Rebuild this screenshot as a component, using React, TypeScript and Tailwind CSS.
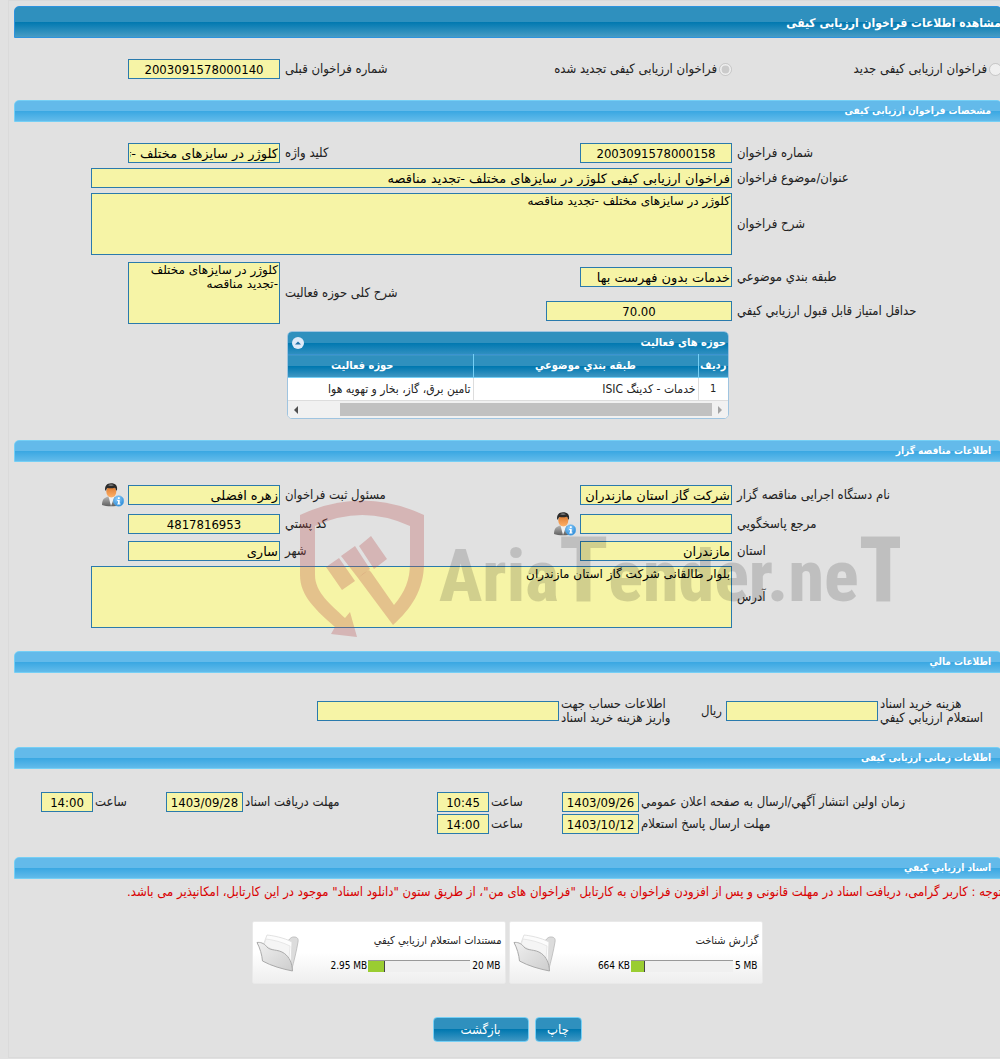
import { useId, useState } from "react";
import type { ReactNode } from "react";

const inputBase = "block h-5 border border-[#2a7aac] bg-[#f6f4a6] px-px text-[13px] leading-[18px] text-black outline-none focus:border-sky-500"
const areaBase = "block h-[62px] resize-none border border-[#2a7aac] bg-[#f6f4a6] px-px py-0 font-['DejaVu_Sans',sans-serif] text-[12px] leading-[14px] text-black outline-none focus:border-sky-500"

type FieldProps = {
  label: ReactNode
  value?: string
  labelClass: string
  inputClass: string
  center?: boolean
  area?: boolean
  children?: ReactNode
}

// numbers are centered, texts start at the right edge
function Field({ label, value = "", labelClass, inputClass, center, area, children }: FieldProps) {
  const id = useId()
  return (
    <div className="flex shrink-0 items-center">
      <label htmlFor={id} className={`shrink-0 text-left ${labelClass}`}>{label}</label>
      {area
        ? <textarea id={id} readOnly defaultValue={value} className={`${areaBase} ${inputClass}`} />
        : <input id={id} type="text" readOnly defaultValue={value} className={`${inputBase} ${inputClass} ${center ? "text-center" : "font-['DejaVu_Sans',sans-serif]"}`} />}
      {children}
    </div>
  )
}

function SectionBar({ title }: { title: string }) {
  return (
    <h2 className="h-[22px] rounded-t-[5px] border border-[#75cff5] bg-[linear-gradient(#63baea_0,#63baea_50%,#39a7e2_50%,#62bbea_100%)] pr-[10px] text-[10px] leading-5 font-bold text-white">
      {title}
    </h2>
  )
}

function PersonInfo() {
  return (
    <button type="button" aria-label="اطلاعات" className="mr-1 shrink-0 cursor-pointer">
      <svg width="22" height="24" viewBox="0 0 22 24">
        <defs>
          <linearGradient id="suit" x1="0" y1="0" x2="0" y2="1">
            <stop offset="0" stopColor="#b5b5b5" />
            <stop offset="1" stopColor="#5f5f5f" />
          </linearGradient>
          <linearGradient id="face" x1="0" y1="0" x2="0" y2="1">
            <stop offset="0" stopColor="#d9762c" />
            <stop offset="1" stopColor="#ffb066" />
          </linearGradient>
          <radialGradient id="info" cx=".4" cy=".3" r=".8">
            <stop offset="0" stopColor="#8fd0ff" />
            <stop offset="1" stopColor="#1d7fd0" />
          </radialGradient>
        </defs>
        <path d="M0 22c0-4 1-7 6-8.500h6c5 1.500 6 4.500 6 8.500-4 1.800-14 1.800-18 0z" fill="url(#suit)" />
        <path d="M6.500 13.500l2.500 9.500 3.500-9.500z" fill="#f2f2f2" />
        <ellipse cx="9.300" cy="8.600" rx="5" ry="5.800" fill="url(#face)" />
        <path d="M3.200 7.500C2.400 3 5 .2 9 .2c4.500 0 6.800 2.600 6 6.800l-.9.800c-.1-2-.9-2.700-1.600-3-2.300.7-5 .7-7 .1-.8.600-1.200 1.200-1.300 2.700z" fill="#2b2b2b" />
        <path d="M6 2.200c1.800-1.200 4.300-1.200 6 .1-2 .8-4.200.8-6-.1z" fill="#777" />
        <circle cx="16.700" cy="18" r="5.200" fill="url(#info)" stroke="#5fb0ea" strokeWidth=".6" />
        <path d="M16 14.200h1.700v1.700H16zM15.200 17h2.500v3.600h.8v1h-3.300v-1h.8V18h-.8z" fill="#fff" />
      </svg>
    </button>
  )
}

function Folder() {
  return (
    <svg width="43" height="38" viewBox="0 0 43 38" className="shrink-0">
      <defs>
        <linearGradient id="front" x1="0" y1="0" x2="1" y2="1">
          <stop offset="0" stopColor="#f0f0f0" />
          <stop offset="1" stopColor="#cdcdcd" />
        </linearGradient>
      </defs>
      <path d="M27 6l5 1c2-3 4-4.500 7-4 3 .5 3.500 2.500 3 5-1.500 9-4 19-6.500 28.500L24 20z" fill="#dcdcdc" stroke="#b9b9b9" strokeWidth=".8" />
      <path d="M8 9l3-8c5 .5 17 2.500 25 7L35 29 10 18z" fill="#fcfcfc" stroke="#dadada" strokeWidth=".8" />
      <path d="M8 11l2-6c8 1 16 3 24 7l-1 12z" fill="#f5f5f5" stroke="#e2e2e2" strokeWidth=".8" />
      <path d="M1 8.500c3-.5 7 .5 9.500 4 4 5 11 2 18 7 5 4 7.500 9 8 17.500-10-2-21-5-30-10C6 21 4 14 1 8.500z" fill="url(#front)" stroke="#aaa" strokeWidth="1" />
    </svg>
  )
}

const docs = [
  { title: "گزارش شناخت", max: "5 MB", used: "664 KB", percent: 14 },
  { title: "مستندات استعلام ارزيابي کيفي", max: "20 MB", used: "2.95 MB", percent: 16 },
]

function DocCard({ doc }: { doc: (typeof docs)[number] }) {
  return (
    <div className="flex h-[63px] w-[254px] items-center justify-between rounded-xs border border-[#e9e9e9] bg-[linear-gradient(#fff_50%,#eee)] px-[3px]">
      <div className="flex flex-col gap-3">
        <a href="#" className="text-[11px] leading-[14px] text-[#222]">{doc.title}</a>
        <div className="flex items-center gap-px text-[10px] leading-3 text-black">
          <span dir="ltr" className="px-px">{doc.max}</span>
          <div className="flex h-3 w-[102px] justify-end border-t border-[#999] bg-[#f0f0f0]">
            <div className="border-r border-[#444] bg-[#9acd32]" style={{ width: `${doc.percent}%` }} />
          </div>
          <span dir="ltr">{doc.used}</span>
        </div>
      </div>
      <Folder />
    </div>
  )
}

function ActivityGrid() {
  const [open, setOpen] = useState(true)
  return (
    <div className="mx-auto mt-[2px] w-[442px] overflow-hidden rounded-[5px] border border-[#9fc4e0] bg-white">
      <div className="flex h-[22px] items-center justify-between bg-[linear-gradient(#2f90be_0,#2f90be_50%,#0078b0_50%,#2f8fc0_100%)] pr-[2px] pl-1 text-[11px] font-bold text-white">
        <span>حوزه های فعالیت</span>
        <button
          type="button"
          aria-label="بستن"
          onClick={() => setOpen(!open)}
          className="flex size-3 cursor-pointer items-center justify-center rounded-full bg-[#dfeaf8]"
        >
          <svg width="6" height="4" viewBox="0 0 6 4"><path d="M0 3.500L3 .5l3 3z" fill="#1f6fa5" /></svg>
        </button>
      </div>
      {open && (
        <>
          <table className="w-full table-fixed border-collapse">
            <thead>
              <tr className="h-[23px] border-t border-b border-t-[#3a93d0] border-b-[#75cff5] bg-[linear-gradient(#2f90be_0,#2f90be_50%,#0078b0_50%,#3f97c3_100%)] text-[11px] leading-4 text-white">
                <th className="w-[30px] p-0">ردیف</th>
                <th className="w-[225px] border-x border-[#75cff5] p-0">طبقه بندي موضوعي</th>
                <th className="p-0 pr-9">حوزه فعالیت</th>
              </tr>
            </thead>
            <tbody>
              <tr className="h-[23px] border-b border-[#ddd] text-[12px] leading-4 text-[#222]">
                <td className="p-0 text-center text-[11px]">1</td>
                <td className="border-x border-[#ddd] px-[2px] py-0">خدمات - کدینگ ISIC</td>
                <td className="px-[2px] py-0">تامین برق، گاز، بخار و تهویه هوا</td>
              </tr>
            </tbody>
          </table>
          <div className="flex h-[17px] items-center bg-[#f1f1f1] px-[6px]">
            <svg width="4" height="8" viewBox="0 0 4 8"><path d="M0 0l4 4-4 4z" fill="#a3a3a3" /></svg>
            <div className="mr-[6px] ml-auto h-[13px] w-[372px] bg-[#c1c1c1]" />
            <svg width="4" height="8" viewBox="0 0 4 8"><path d="M4 0L0 4l4 4z" fill="#505050" /></svg>
          </div>
        </>
      )}
    </div>
  )
}

function Watermark() {
  return (
    <div dir="ltr" className="pointer-events-none absolute top-[60px] right-[102px]">
      <svg width="600" height="140" viewBox="300 500 600 140">
        <g fill="#b94e50" fillOpacity=".3">
          <path d="M300 515Q362 486 424 515V563C424 590 411 609 393 625L358 578 364 573 369 570 371 572 394 605C405 592 410 580 410 563V526Q362 504 315 526V575C315 592 330 604 345 618L350 612 357 637 331 634 335 627C316 610 300 596 300 575Z" />
          <path d="M359 546l12-10 16 23-13 10zM341 556l14-10 15 23-12 9zM326 567l13-9 16 23-13 9z" />
        </g>
        <text x="439" y="601" fontSize="72" fontWeight="800" fill="#000" fillOpacity=".15" className="font-['Liberation_Sans_Narrow','Roboto_Condensed','Roboto',sans-serif]">
          Aria<tspan fontSize="90">T</tspan>ender.ne<tspan fontSize="90">T</tspan>
        </text>
      </svg>
    </div>
  )
}

const times = [
  [
    { label: "زمان اولین انتشار آگهي/ارسال به صفحه اعلان عمومي", date: "1403/09/26", time: "10:45", width: "w-[363px]" },
    { label: "مهلت دریافت اسناد", date: "1403/09/28", time: "14:00", width: "w-[194px]" },
  ],
  [
    { label: "مهلت ارسال پاسخ استعلام", date: "1403/10/12", time: "14:00", width: "w-[363px]" },
  ],
]

const buttonBase = "h-[25px] cursor-pointer rounded-[4px] border border-[#75cff5] bg-[linear-gradient(#2f90be_0,#2f90be_50%,#0078b0_50%,#3f97c3_100%)] text-[13px] text-white"

export default function App() {
  return (
    <div dir="rtl" className="min-h-screen overflow-hidden bg-[#e1e1e1] font-['DejaVu_Sans_Condensed','DejaVu_Sans','Liberation_Sans',sans-serif] text-[13px] leading-[14px] text-[#222]">
      <div className="-mr-[3px] ml-2 min-h-[1058px] border border-[#dadada] pt-[5px] pl-[5px] whitespace-nowrap">
        <h1 className="h-8 rounded-t-[5px] border border-[#2d93de] bg-[linear-gradient(#2f90be_0,#2f90be_50%,#0078b0_50%,#469cc5_100%)] text-[12px] leading-8 font-bold text-white">
          مشاهده اطلاعات فراخوان ارزیابی کیفی
        </h1>

        <div className="flex items-center pt-[21px] pb-[21px]">
          <label className="flex w-[270px] shrink-0 items-center gap-[2px]">
            <input type="radio" name="kind" disabled className="size-[13px]" />
            فراخوان ارزیابی کیفی جدید
          </label>
          <label className="flex w-[220px] shrink-0 items-center gap-[2px]">
            <input type="radio" name="kind" disabled defaultChecked className="size-[13px]" />
            فراخوان ارزیابی کیفی تجدید شده
          </label>
          <Field label="شماره فراخوان قبلی" value="2003091578000140" center labelClass="w-[232px] pl-[5px]" inputClass="w-[152px]" />
        </div>

        <SectionBar title="مشخصات فراخوان ارزیابی کیفی" />
        <div className="flex flex-col gap-[5px] pt-[21px] pb-[21px]">
          <div className="flex">
            <Field label="شماره فراخوان" value="2003091578000158" center labelClass="w-[270px] pl-[5px]" inputClass="w-[152px]" />
            <Field label="کلید واژه" value="کلوژر در سایزهای مختلف -تجدید مناقصه" labelClass="w-[300px] pl-[5px]" inputClass="w-[152px]" />
          </div>
          <Field label="عنوان/موضوع فراخوان" value="فراخوان ارزیابی کیفی کلوژر در سایزهای مختلف -تجدید مناقصه" labelClass="w-[270px] pl-[5px]" inputClass="w-[641px]" />
          <Field area label="شرح فراخوان" value="کلوژر در سایزهای مختلف -تجدید مناقصه" labelClass="w-[270px] pl-[5px]" inputClass="w-[641px]" />
          <div className="flex pt-[2px]">
            <div className="flex w-[456px] shrink-0 flex-col gap-[14px] pt-[5px]">
              <Field label="طبقه بندي موضوعي" value="خدمات بدون فهرست بها" labelClass="w-[270px] pl-[5px]" inputClass="w-[152px]" />
              <Field label="حداقل امتیاز قابل قبول ارزیابي کیفي" value="70.00" center labelClass="w-[270px] pl-[5px]" inputClass="w-[186px]" />
            </div>
            <Field area label="شرح کلی حوزه فعالیت" value="کلوژر در سایزهای مختلف -تجدید مناقصه" labelClass="w-[266px] pl-[5px]" inputClass="w-[152px]" />
          </div>
          <ActivityGrid />
        </div>

        <section className="relative">
          <SectionBar title="اطلاعات مناقصه گزار" />
          <div className="flex flex-col gap-[5px] pt-[21px] pb-[23px]">
            <div className="flex h-6 items-center">
              <Field label="نام دستگاه اجرایی مناقصه گزار" value="شرکت گاز استان مازندران" labelClass="w-[270px] pl-[5px]" inputClass="w-[152px]" />
              <Field label="مسئول ثبت فراخوان" value="زهره افضلی" labelClass="w-[300px] pl-[5px]" inputClass="w-[152px]"><PersonInfo /></Field>
            </div>
            <div className="flex h-6 items-center">
              <Field label="مرجع پاسخگویي" labelClass="w-[270px] pl-[5px]" inputClass="w-[152px]"><PersonInfo /></Field>
              <Field label="کد پستي" value="4817816953" center labelClass="w-[274px] pl-[5px]" inputClass="w-[152px]" />
            </div>
            <div className="flex">
              <Field label="استان" value="مازندران" labelClass="w-[270px] pl-[5px]" inputClass="w-[152px]" />
              <Field label="شهر" value="ساری" labelClass="w-[300px] pl-[5px]" inputClass="w-[152px]" />
            </div>
            <Field area label="آدرس" value="بلوار طالقانی شرکت گاز استان مازندران" labelClass="w-[270px] pl-[5px]" inputClass="w-[641px]" />
          </div>
          <Watermark />
        </section>

        <SectionBar title="اطلاعات مالي" />
        <div className="flex items-center pt-6 pb-[22px]">
          <Field
            label={<>هزینه خرید اسناد<br />استعلام ارزیابي کیفي</>}
            labelClass="w-[124px] pl-[2px]"
            inputClass="w-[152px]"
          />
          <span className="w-[30px] pr-1">ریال</span>
          <Field
            label={<>اطلاعات حساب جهت<br />واریز هزینه خرید اسناد</>}
            labelClass="w-[137px] pl-[2px]"
            inputClass="w-[242px]"
          />
        </div>

        <SectionBar title="اطلاعات زمانی ارزیابی کیفی" />
        <div className="flex flex-col gap-[2px] pt-[23px] pb-[23px]">
          {times.map((row, i) => (
            <div key={i} className="flex">
              {row.map((t) => (
                <div key={t.label} className="flex">
                  <Field label={t.label} value={t.date} center labelClass={`${t.width} pl-[2px]`} inputClass="w-[77px]" />
                  <Field label="ساعت" value={t.time} center labelClass="w-[73px] pl-[2px]" inputClass="w-[52px]" />
                </div>
              ))}
            </div>
          ))}
        </div>

        <SectionBar title="اسناد ارزيابي کيفي" />
        <p className="pt-[6px] text-[#d90000]">
          توجه : کاربر گرامی، دریافت اسناد در مهلت قانونی و پس از افزودن فراخوان به کارتابل "فراخوان های من"، از طریق ستون "دانلود اسناد" موجود در این کارتابل، امکانپذیر می باشد.
        </p>
        <div className="flex justify-center gap-[3px] pt-[22px] pr-[2px]">
          {docs.map((d) => <DocCard key={d.title} doc={d} />)}
        </div>
        <div className="flex justify-center gap-[6px] pt-[33px] pr-[2px]">
          <button type="button" className={`${buttonBase} w-[47px]`}>چاپ</button>
          <button type="button" className={`${buttonBase} w-24`}>بازگشت</button>
        </div>
      </div>
    </div>
  )
}
